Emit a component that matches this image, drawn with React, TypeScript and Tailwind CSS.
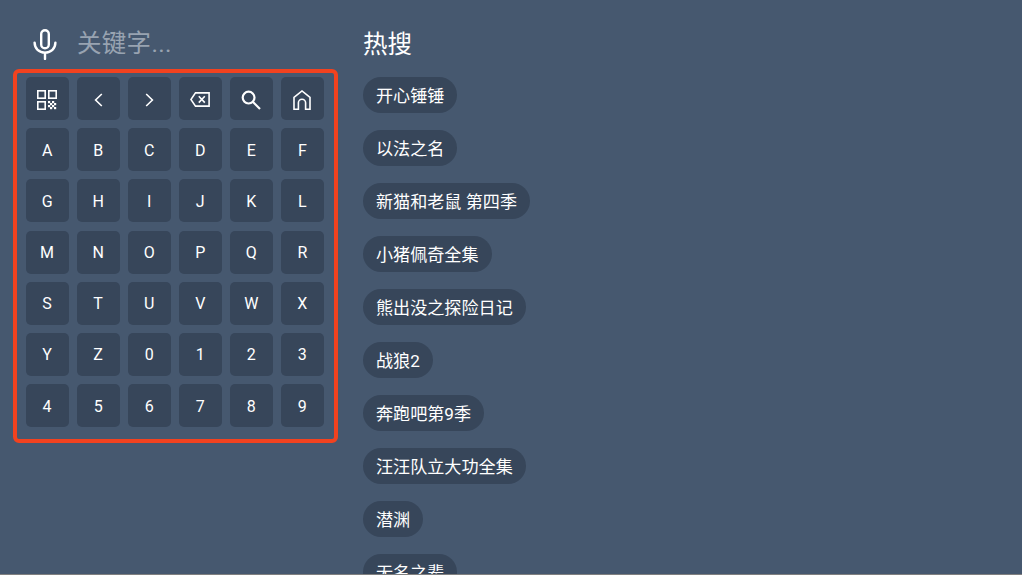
const keys = "ABCDEFGHIJKLMNOPQRSTUVWXYZ0123456789".split("");

const hotWords = [
  "开心锤锤",
  "以法之名",
  "新猫和老鼠 第四季",
  "小猪佩奇全集",
  "熊出没之探险日记",
  "战狼2",
  "奔跑吧第9季",
  "汪汪队立大功全集",
  "潜渊",
  "无名之辈",
];

function Key({ children }: { children: React.ReactNode }) {
  return (
    <div className="flex h-[43px] w-[43px] items-center justify-center rounded-[5px] bg-[#37465a] pt-[2px] text-[16px] text-white">
      {children}
    </div>
  );
}

function MicIcon() {
  return (
    <svg width="24" height="31" viewBox="0 0 24 31" fill="none" stroke="white" strokeWidth="2.4" strokeLinecap="round">
      <rect x="8.2" y="1.2" width="7.6" height="18" rx="3.8" />
      <path d="M1.6 13.6c0 6 4.4 10 10.4 10s10.4-4 10.4-10" />
      <path d="M12 24v6" />
    </svg>
  );
}

function QrIcon() {
  return (
    <svg width="20" height="20" viewBox="0 0 20 20" fill="none" stroke="white" strokeWidth="1.6">
      <rect x="0.8" y="0.8" width="7.4" height="7.4" />
      <rect x="11.8" y="0.8" width="7.4" height="7.4" />
      <rect x="0.8" y="11.8" width="7.4" height="7.4" />
      <g fill="white" stroke="none">
        <rect x="11" y="11" width="2.2" height="2.2" />
        <rect x="15" y="11" width="2.2" height="2.2" />
        <rect x="13" y="13" width="2.2" height="2.2" />
        <rect x="17" y="13" width="2.2" height="2.2" />
        <rect x="11" y="15" width="2.2" height="2.2" />
        <rect x="15" y="15" width="2.2" height="2.2" />
        <rect x="13" y="17" width="2.2" height="2.2" />
        <rect x="17" y="17" width="2.2" height="2.2" />
      </g>
    </svg>
  );
}

function ChevronIcon({ flip }: { flip?: boolean }) {
  return (
    <svg width="9" height="14" viewBox="0 0 9 14" fill="none" stroke="white" strokeWidth="1.6" className={flip ? "rotate-180" : ""}>
      <path d="M7.8 1 1.6 7l6.2 6" />
    </svg>
  );
}

function BackspaceIcon() {
  return (
    <svg width="20" height="15" viewBox="0 0 20 15" fill="none" stroke="white" strokeWidth="1.6">
      <path d="M5.5 0.9H19.1V14.1H5.5L0.9 7.5Z" />
      <path d="M8.8 4.2 14.8 10.6M14.8 4.2 8.8 10.6" />
    </svg>
  );
}

function SearchIcon() {
  return (
    <svg width="20" height="20" viewBox="0 0 20 20" fill="none" stroke="white" strokeWidth="2.2">
      <circle cx="7.6" cy="7.6" r="5.9" />
      <path d="M11.8 11.8 19 19" />
    </svg>
  );
}

function HomeIcon() {
  return (
    <svg width="18" height="20" viewBox="0 0 18 20" fill="none" stroke="white" strokeWidth="1.6">
      <path d="M1 19.2V7.4L9 1l8 6.4v11.8h-4.4v-6.4a3.6 3.6 0 0 0-7.2 0v6.4Z" />
    </svg>
  );
}

export default function App() {
  return (
    <div
      className="flex h-[575px] w-[1022px] flex-col overflow-hidden bg-[#46586f]"
      style={{ fontFamily: '"Roboto", "Noto Sans CJK SC", sans-serif' }}
    >
      <div className="flex min-h-0 flex-1 overflow-hidden">
        {/* 左侧键盘 */}
        <div className="ml-[13px] w-[325px] shrink-0 pt-[26px]">
          <div className="flex h-[36px] items-center pl-[20px]">
            <MicIcon />
            <span className="ml-[20px] text-[24.5px] tracking-[0.3px] text-[#98a3b1]">关键字...</span>
          </div>
          <div className="mt-[7px] grid h-[374px] grid-cols-[repeat(6,43px)] content-start gap-x-[8.05px] gap-y-[8.2px] rounded-[6px] border-[4px] border-[#f2421f] pl-[8.6px] pt-[4px]">
            <Key><QrIcon /></Key>
            <Key><ChevronIcon /></Key>
            <Key><ChevronIcon flip /></Key>
            <Key><BackspaceIcon /></Key>
            <Key><SearchIcon /></Key>
            <Key><HomeIcon /></Key>
            {keys.map((k) => (
              <Key key={k}>{k}</Key>
            ))}
          </div>
        </div>

        {/* 热搜 */}
        <div className="ml-[25px] flex flex-col items-start pt-[27px]">
          <div className="h-[36px] text-[24.5px] leading-[36px] text-white">热搜</div>
          <div className="mt-[14px] flex flex-col items-start gap-[16.8px]">
            {hotWords.map((w) => (
              <div
                key={w}
                className="flex h-[36.2px] shrink-0 items-center rounded-full bg-[#37465a] px-[13px] pt-[3px] text-[17.1px] leading-none text-white"
              >
                {w}
              </div>
            ))}
          </div>
        </div>
      </div>
      <div className="h-px shrink-0 bg-[#808080]" />
    </div>
  );
}
